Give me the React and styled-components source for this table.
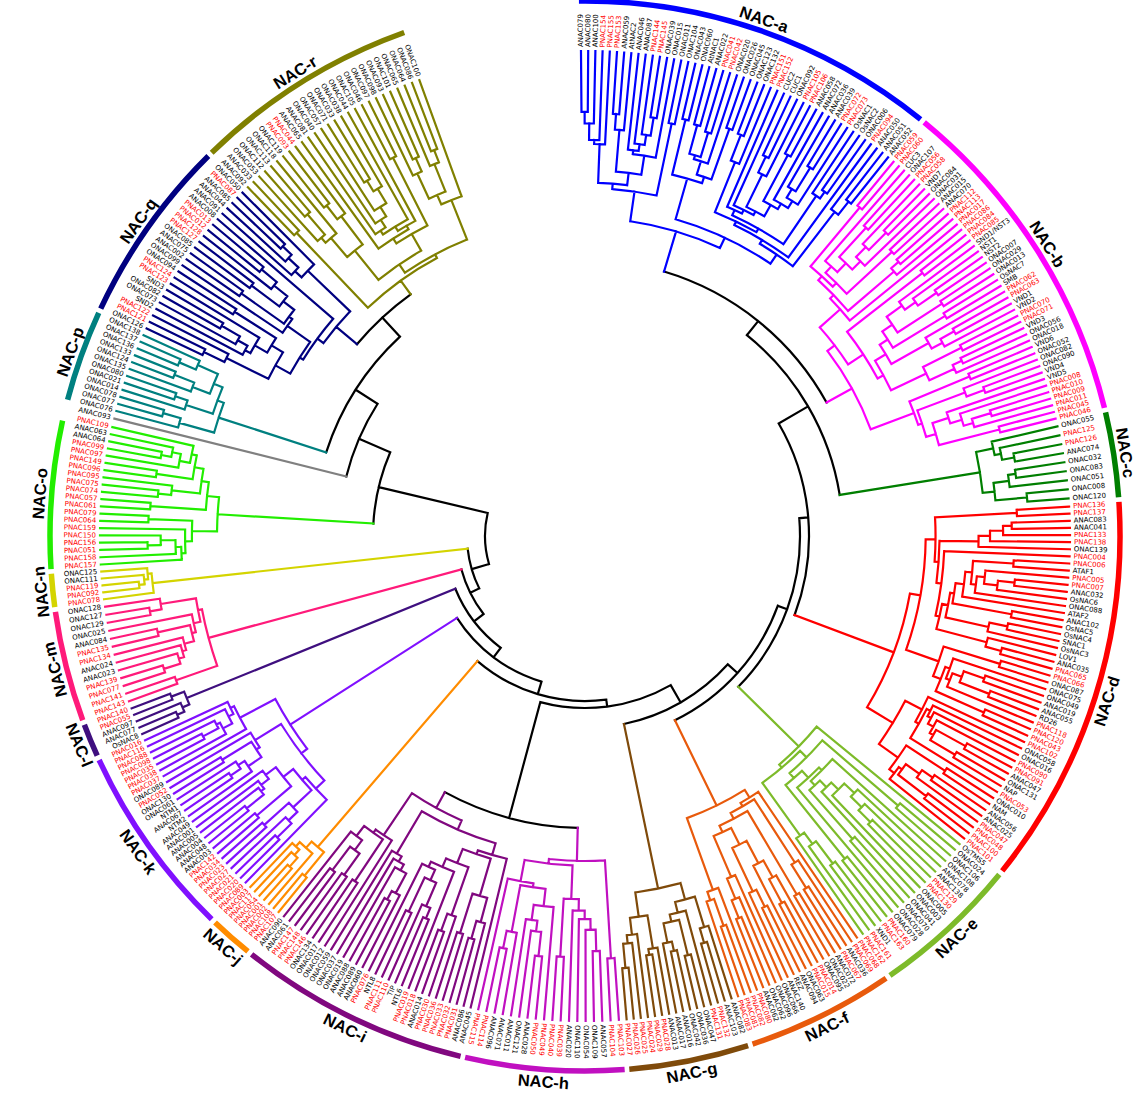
import React from "react";
import styled, { createGlobalStyle } from "styled-components";

const GlobalStyle = createGlobalStyle`
  html, body {
    margin: 0;
    padding: 0;
    background: #ffffff;
  }
`;

const CX = 585;
const CY = 536;
const R_TIP = 485;
const R_LABEL = 489;
const R_ARC = 535;
const R_NAME = 547;
const FLIP_AT = 193.2;

// clades, clockwise from the top (angles in degrees, 0 = up)
const CLADES = [
  { id: "a", name: "NAC-a", color: "#0000ff", range: [-0.9, 39.1], root: 318,
    leaves: "ANAC079 ANAC080 ANAC100 PNAC154 PNAC155 PNAC153 ANAC059 AtNAC2 ANAC046 ANAC087 PNAC144 PNAC145 ONAC039 ONAC015 ONAC011 ONAC104 ONAC043 ONAC060 AtNAC1 ANAC022 PNAC041 PNAC042 ONAC020 ONAC026 ONAC045 ONAC123 ONAC132 PNAC151 PNAC152 CUC2 CUC1 ONAC092 PNAC105 PNAC106 ANAC058 ANAC072 ANAC036 ANAC039 PNAC072 PNAC073 OsNAC1 OsNAC2 ONAC006 PNAC094 ANAC050 ANAC051 ANAC052" },
  { id: "b", name: "NAC-b", color: "#ff00ff", range: [39.1, 76.4], root: 305,
    leaves: "PNAC059 PNAC060 CUC3 ONAC107 PNAC056 PNAC058 VND7 ONAC084 ONAC031 ANAC015 ANAC070 PNAC112 PNAC113 PNAC017 PNAC086 PNAC084 PNAC085 SND1/NST3 NST1 NST2 ONAC007 ONAC029 ONAC013 OsNAC7 SMB PNAC062 PNAC063 VND1 VND2 PNAC070 PNAC071 VND3 ONAC056 ONAC018 VND6 ONAC052 ONAC082 ONAC090 VND4 VND5 PNAC008 PNAC010 PNAC009 PNAC011 PNAC045 PNAC046" },
  { id: "c", name: "NAC-c", color: "#007f00", range: [76.4, 86.1], root: 400,
    leaves: "ONAC055 PNAC125 PNAC126 ANAC074 ONAC032 ONAC083 ONAC051 ONAC008 ONAC120" },
  { id: "d", name: "NAC-d", color: "#ff0000", range: [86.1, 129], root: 330,
    leaves: "PNAC136 PNAC137 ANAC083 ANAC041 PNAC133 PNAC138 ONAC139 PNAC004 PNAC006 ATAF1 PNAC005 PNAC007 ANAC032 OsNAC6 ONAC088 ATAF2 ANAC102 OsNAC5 OsNAC4 SNAC1 OsNAC3 LOV1 ANAC035 PNAC065 PNAC066 ONAC087 ONAC075 ONAC049 ANAC019 ANAC055 RD26 PNAC118 PNAC120 PNAC043 PNAC102 ONAC058 ONAC016 PNAC090 PNAC091 ANAC047 ONAC131 NAP PNAC053 ONAC010 NAM ANAC056 ANAC025 PNAC047 PNAC048 PNAC100 PNAC101" },
  { id: "e", name: "NAC-e", color: "#7dbb2a", range: [129, 145.5], root: 300,
    leaves: "OsTMS5 ONAC024 ONAC106 ONAC108 ANAC078 ANAC138 PNAC129 PNAC130 ONAC005 ONAC003 ONAC041 ONAC070 ONAC028 ONAC079 PNAC160 PNAC163 XND1 PNAC161 PNAC162" },
  { id: "f", name: "NAC-f", color: "#e85a0c", range: [145.5, 162], root: 300,
    leaves: "PNAC068 PNAC069 ANAC036 PNAC067 ANAC072 ONAC022 ONAC095 PNAC014 PNAC015 ONAC063 ANAC094 REZ ANAC140 ONAC066 ONAC096 ONAC062 ANAC062 PNAC080 PNAC082 PNAC081 PNAC083" },
  { id: "g", name: "NAC-g", color: "#7f4a0a", range: [162, 175.5], root: 360,
    leaves: "ANAC082 ANAC103 PNAC132 PNAC131 ONAC047 ONAC036 ONAC042 ANAC016 ANAC017 ANAC013 PNAC028 PNAC029 PNAC024 PNAC025 PNAC026 PNAC027" },
  { id: "h", name: "NAC-h", color: "#c010c0", range: [175.5, 193.2], root: 325,
    leaves: "PNAC103 PNAC104 ANAC057 ONAC109 ONAC054 ONAC110 ANAC020 PNAC039 PNAC040 PNAC049 PNAC050 ANAC028 ONAC121 ANAC011 ANAC071 ANAC096 PNAC114 PNAC115" },
  { id: "i", name: "NAC-i", color: "#80087f", range: [193.2, 218.8], root: 310,
    leaves: "ANAC045 ANAC086 PNAC031 PNAC032 PNAC033 PNAC036 PNAC030 ANAC014 PNAC018 PNAC019 NTL6 TIP PNAC110 PNAC111 NTL8 PNAC076 ANAC060 ANAC089 ANAC088 ONAC019 ONAC037 ONAC059 ONAC012 ONAC017 ONAC134 PNAC146 PNAC148 PNAC147 ANAC061 ANAC090" },
  { id: "j", name: "NAC-j", color: "#ff8c00", range: [218.8, 224], root: 410,
    leaves: "PNAC107 PNAC108 PNAC002 PNAC001 PNAC054 PNAC117 PNAC003" },
  { id: "k", name: "NAC-k", color: "#8010ff", range: [224, 245.5], root: 350,
    leaves: "PNAC089 PNAC020 PNAC021 PNAC027 PNAC023 PNAC034 PNAC142 ANAC003 ANAC048 ANAC004 ANAC005 ANAC001 ANAC049 NTM2 ANAC067 NTM1 ONAC061 ONAC130 PNAC052 ONAC089 PNAC037 PNAC038 PNAC035 PNAC098 PNAC088 PNAC116 PNAC016" },
  { id: "l", name: "NAC-l", color: "#3f0f7f", range: [245.5, 249.6], root: 430,
    leaves: "OsNAC8 ANAC077 ANAC097 PNAC055 PNAC140" },
  { id: "m", name: "NAC-m", color: "#ff1a7a", range: [249.6, 262.1], root: 390,
    leaves: "PNAC143 PNAC141 PNAC077 PNAC139 ANAC023 ANAC024 PNAC134 PNAC135 ANAC084 ONAC025 ONAC129 ONAC127 ONAC128" },
  { id: "n", name: "NAC-n", color: "#d4d400", range: [262.1, 266.2], root: 435,
    leaves: "PNAC078 PNAC092 PNAC119 ONAC111 ONAC125" },
  { id: "o", name: "NAC-o", color: "#22ee00", range: [266.2, 283.4], arc: [266.2, 282.7], root: 368,
    leaves: "PNAC157 PNAC158 PNAC051 PNAC156 PNAC150 PNAC159 PNAC064 PNAC079 PNAC061 PNAC057 PNAC074 PNAC075 PNAC095 PNAC096 PNAC149 PNAC097 PNAC099 ANAC064 ANAC063 PNAC109" },
  { id: "gray", color: "#808080", range: [283.6, 284.4], leaves: "ANAC093" },
  { id: "p", name: "NAC-p", color: "#008080", range: [284.5, 294.9], root: 385,
    leaves: "ONAC076 ONAC077 ONAC078 ONAC014 ONAC021 ONAC080 ONAC135 ONAC124 ONAC133 ONAC136 ONAC137 ONAC138" },
  { id: "q", name: "NAC-q", color: "#000080", range: [294.9, 315.5], root: 325,
    leaves: "ONAC126 PNAC121 PNAC122 SND2 ONAC073 ONAC082 SND3 PNAC123 PNAC124 ONAC094 ONAC099 ANAC002 ANAC075 ONAC085 PNAC127 PNAC128 PNAC012 PNAC013 ANAC008 ANAC091 ANAC044 ANAC085 PNAC087 ONAC050" },
  { id: "r", name: "NAC-r", color: "#808000", range: [315.5, 340.5], root: 315,
    leaves: "ANAC092 ANAC033 ONAC053 ONAC112 ONAC113 ONAC118 ONAC119 PNAC093 PNAC044 ANAC065 ANAC081 ONAC040 ONAC057 ONAC071 ONAC033 ONAC038 ONAC044 ONAC105 ONAC046 ONAC097 ONAC098 ONAC093 ONAC101 ONAC065 ONAC064 ONAC086 ONAC100" },
];

const N = (r, kids) => ({ r, kids });

// backbone (black) joining the clades
const BACKBONE = N(100, [
  N(212, ["o", N(246, ["gray", N(272, ["p", N(298, ["q", "r"])])])]),
  N(118, ["n", N(128, ["m", N(140, ["l", N(152, ["k", N(165, ["j",
    N(172, [
      N(292, ["i", "h"]),
      N(192, ["g", N(205, ["f", N(215, ["e", N(224, ["d", N(258, ["c", N(276, ["a", "b"])])])])])]),
    ]),
  ])])])])]),
]);

function mulberry32(seed) {
  let a = seed;
  return () => {
    a |= 0;
    a = (a + 0x6d2b79f5) | 0;
    let t = Math.imul(a ^ (a >>> 15), 1 | a);
    t = (t + Math.imul(t ^ (t >>> 7), 61 | t)) ^ t;
    return ((t ^ (t >>> 14)) >>> 0) / 4294967296;
  };
}

const fx = (v) => v.toFixed(2);

function pol(r, t) {
  const a = (t * Math.PI) / 180;
  return [r * Math.sin(a), -r * Math.cos(a)];
}

function arcPath(r, t1, t2) {
  const [x1, y1] = pol(r, t1);
  const [x2, y2] = pol(r, t2);
  return `M${fx(x1)} ${fx(y1)}A${r} ${r} 0 ${t2 - t1 > 180 ? 1 : 0} 1 ${fx(x2)} ${fx(y2)}`;
}

function radial(r1, r2, t) {
  const [x1, y1] = pol(r1, t);
  const [x2, y2] = pol(r2, t);
  return `M${fx(x1)} ${fx(y1)}L${fx(x2)} ${fx(y2)}`;
}

function buildClade(c, rand) {
  const names = c.leaves.split(" ");
  const n = names.length;
  const [s, e] = c.range;
  const step = (e - s) / n;
  const tips = names.map((name, i) => ({ tip: true, name, theta: s + (i + 0.5) * step, r: R_TIP }));
  if (n === 1) return tips[0];
  const lnN = Math.log(n);
  const rec = (lo, hi, parentR) => {
    const k = hi - lo;
    if (k === 1) return tips[lo];
    let r;
    if (k === n) {
      r = c.root;
    } else {
      const t = Math.log(k) / lnN;
      r = R_TIP - 15 - (R_TIP - 15 - c.root) * Math.pow(t, 0.72) + (rand() - 0.5) * 16 * (1 - t);
      r = Math.max(r, parentR + 4);
      r = Math.min(r, R_TIP - 6);
    }
    let sp;
    if (k === 2) {
      sp = 1;
    } else {
      const u = rand();
      const q = Math.max(1, Math.floor(k * 0.3));
      if (u < 0.36) sp = 1 + Math.floor(rand() * q);
      else if (u < 0.72) sp = k - 1 - Math.floor(rand() * q);
      else sp = Math.round(k * (0.3 + 0.4 * rand()));
      sp = Math.min(k - 1, Math.max(1, sp));
    }
    const a = rec(lo, lo + sp, r);
    const b = rec(lo + sp, hi, r);
    return { r, children: [a, b], theta: (a.theta + b.theta) / 2 };
  };
  return rec(0, n, c.root - 3);
}

function buildFigure() {
  const rand = mulberry32(20240611);
  const byId = {};
  CLADES.forEach((c) => {
    byId[c.id] = { clade: c, tree: buildClade(c, rand) };
  });

  const segs = {};
  const add = (color, d) => {
    (segs[color] = segs[color] || []).push(d);
  };
  const tips = [];

  const drawClade = (node, color) => {
    if (node.tip) {
      tips.push({ ...node, color });
      return;
    }
    const ts = node.children.map((ch) => ch.theta);
    add(color, arcPath(node.r, Math.min(...ts), Math.max(...ts)));
    node.children.forEach((ch) => {
      add(color, radial(node.r, ch.r, ch.theta));
      drawClade(ch, color);
    });
  };

  const layout = (spec) => {
    const kids = spec.kids.map((k) => {
      if (typeof k === "string") {
        const { clade, tree } = byId[k];
        return { kind: "clade", clade, tree, theta: tree.theta, r: tree.r };
      }
      return { kind: "bb", ...layout(k) };
    });
    const theta = (kids[0].theta + kids[kids.length - 1].theta) / 2;
    return { r: spec.r, kids, theta };
  };

  const drawBackbone = (node) => {
    const ts = node.kids.map((k) => k.theta);
    add("#000000", arcPath(node.r, Math.min(...ts), Math.max(...ts)));
    node.kids.forEach((k) => {
      if (k.kind === "bb") {
        add("#000000", radial(node.r, k.r, k.theta));
        drawBackbone(k);
      } else {
        add(k.clade.color, radial(node.r, k.r, k.theta));
        drawClade(k.tree, k.clade.color);
      }
    });
  };

  drawBackbone(layout(BACKBONE));
  const paths = Object.entries(segs).map(([color, list]) => ({ color, d: list.join("") }));
  return { paths, tips };
}

const Page = styled.div`
  width: 1143px;
  height: 1099px;
  background: #ffffff;
  overflow: hidden;
`;

const Figure = styled.svg`
  display: block;
  width: 1143px;
  height: 1099px;
`;

const Branch = styled.path`
  fill: none;
  stroke: ${(p) => p.$color};
  stroke-width: 2.2px;
  stroke-linecap: square;
  stroke-linejoin: miter;
`;

const CladeArc = styled.path`
  fill: none;
  stroke: ${(p) => p.$color};
  stroke-width: 5.5px;
  stroke-linecap: butt;
`;

const LeafLabel = styled.text`
  font-family: "DejaVu Sans", "Liberation Sans", sans-serif;
  font-size: 7px;
  fill: ${(p) => (p.$red ? "#ff0000" : "#000000")};
`;

const CladeName = styled.text`
  font-family: "Liberation Sans", Arial, sans-serif;
  font-weight: 700;
  font-size: 16.5px;
  fill: #000000;
`;

function Leaf({ tip }) {
  const [x, y] = pol(R_LABEL, tip.theta);
  const flip = tip.theta > FLIP_AT;
  const rot = flip ? tip.theta + 90 : tip.theta - 90;
  return (
    <LeafLabel
      x={fx(x)}
      y={fx(y)}
      transform={`rotate(${fx(rot)} ${fx(x)} ${fx(y)})`}
      textAnchor={flip ? "end" : "start"}
      dominantBaseline="central"
      $red={tip.name.startsWith("PNAC")}
    >
      {tip.name}
    </LeafLabel>
  );
}

function CladeBand({ clade }) {
  const [s, e] = clade.arc || clade.range;
  const mid = (s + e) / 2;
  const [x, y] = pol(R_NAME, mid);
  const rot = mid > 90 && mid < 250 ? mid - 180 : mid;
  return (
    <g>
      <CladeArc d={arcPath(R_ARC, s + 0.25, e - 0.25)} $color={clade.color} />
      <CladeName
        x={fx(x)}
        y={fx(y)}
        transform={`rotate(${fx(rot)} ${fx(x)} ${fx(y)})`}
        textAnchor="middle"
        dominantBaseline="central"
      >
        {clade.name}
      </CladeName>
    </g>
  );
}

export default function App() {
  const { paths, tips } = React.useMemo(buildFigure, []);
  return (
    <Page>
      <GlobalStyle />
      <Figure viewBox="0 0 1143 1099">
        <g transform={`translate(${CX} ${CY})`}>
          {paths.map((p) => (
            <Branch key={p.color} d={p.d} $color={p.color} />
          ))}
          {CLADES.filter((c) => c.name).map((c) => (
            <CladeBand key={c.id} clade={c} />
          ))}
          {tips.map((t, i) => (
            <Leaf key={i} tip={t} />
          ))}
        </g>
      </Figure>
    </Page>
  );
}
